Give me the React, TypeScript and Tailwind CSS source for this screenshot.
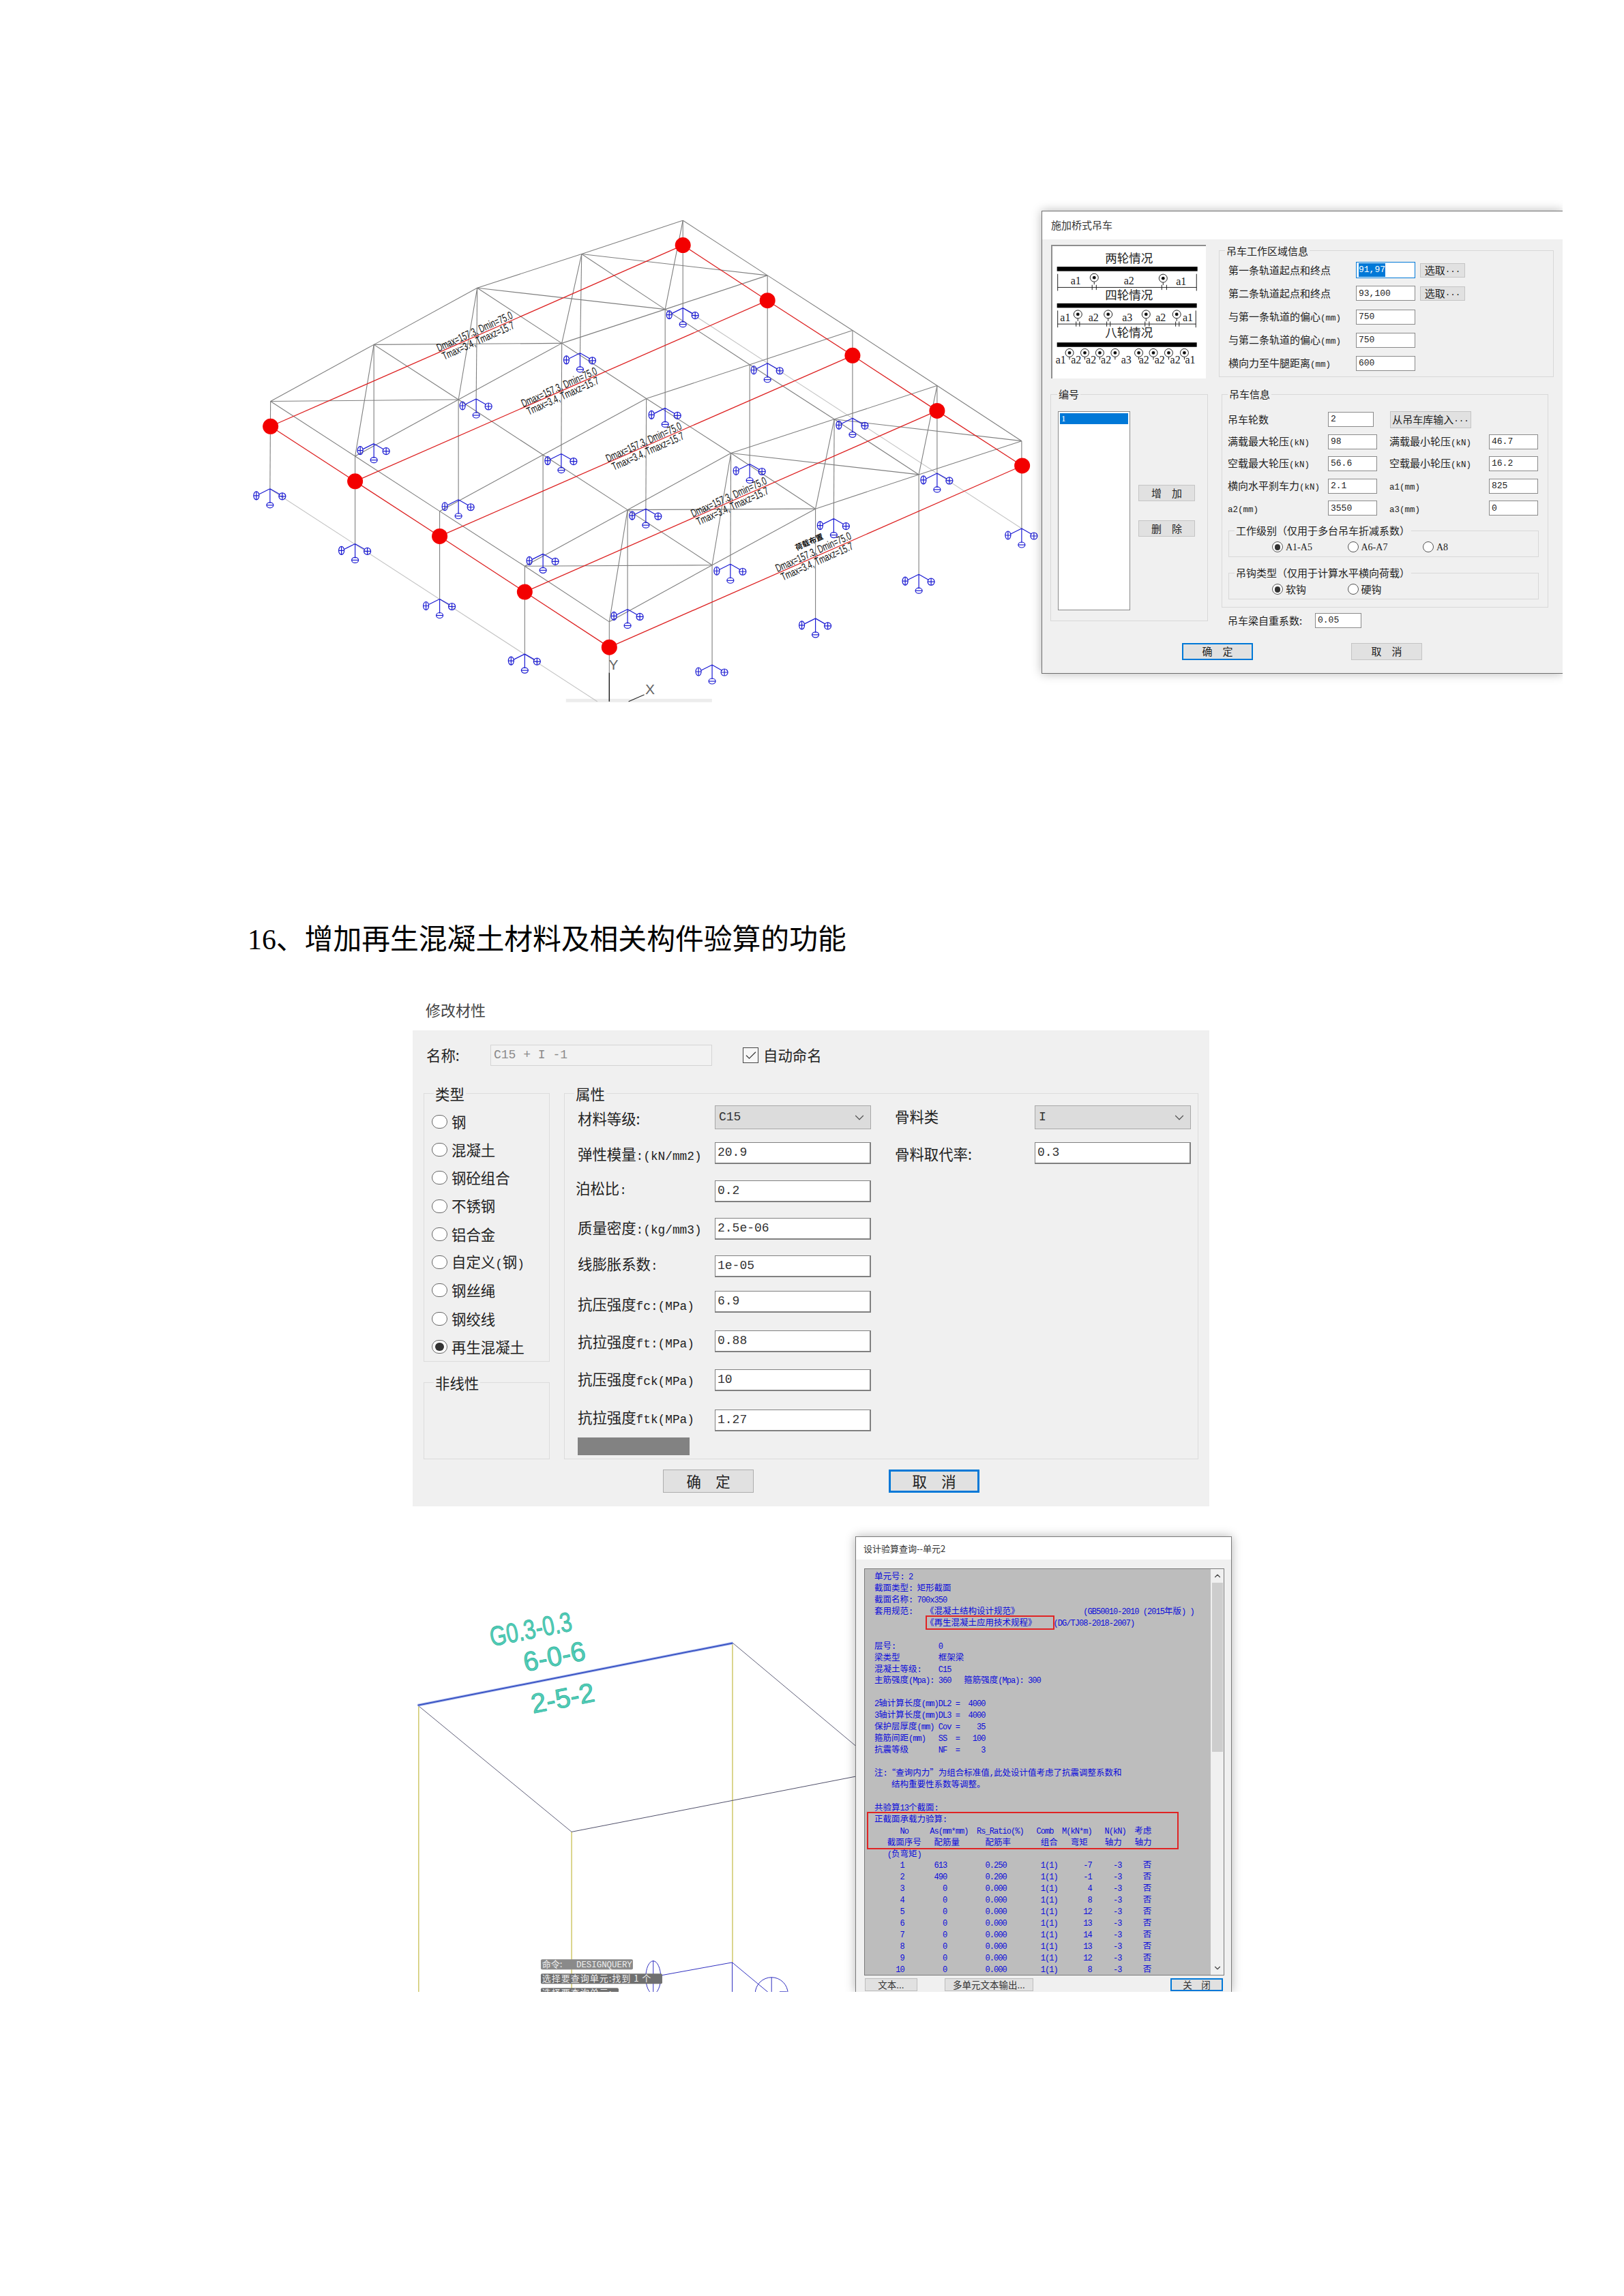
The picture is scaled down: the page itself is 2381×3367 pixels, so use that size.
import { Check, ChevronDown, ChevronUp } from "lucide-react";
import type { ReactNode } from "react";

const range = (n: number) => Array.from({ length: n }, (_, i) => i);

// splits a string into half-width and full-width runs, like SimSun in the old dialogs
function Mixed({ text, a, c }: { text: string; a: string; c: string }) {
  const runs = text.match(/[\x00-\x7f]+|[^\x00-\x7f]+/g) ?? [];
  return (
    <>
      {runs.map((r, i) => (
        <span key={i} className={/^[\x00-\x7f]/.test(r) ? a : c}>
          {r}
        </span>
      ))}
    </>
  );
}

/* ---------- frame drawing at the top ---------- */

const GRID = [
  [[74, 620], [236, 782], [398, 944], [561, 1106], [723, 1270]],
  [[272, 453], [434, 615], [596, 778], [758, 940], [920, 1103]],
  [[470, 286], [632, 449], [794, 612], [956, 773], [1118, 937]],
  [[670, 186], [830, 349], [992, 512], [1154, 673], [1316, 836]],
  [[864, 87], [1026, 249], [1189, 411], [1351, 574], [1513, 737]],
];
const BASES = [
  [[73, 878], [236, 1040], [398, 1203], [561, 1365], null],
  [[272, 745], [434, 910], [596, 1070], [758, 1233], [920, 1397]],
  [[468, 613], [631, 775], [793, 937], [955, 1100], [1118, 1260]],
  [[667, 478], [830, 640], [992, 805], [1153, 966], [1316, 1130]],
  [[864, 345], [1026, 508], [1189, 670], [1351, 832], [1513, 995]],
];
const LEFT = [[74, 694], [236, 856], [398, 1018], [561, 1182], [723, 1345]];
const RIGHT = [[864, 160], [1026, 323], [1189, 485], [1351, 648], [1514, 810]];
const LABELS = [
  [465, 415, 472, 442],
  [627, 579, 634, 605],
  [789, 741, 797, 768],
  [952, 903, 959, 930],
  [1114, 1065, 1121, 1093],
];

const fx = (x: number) => x / 1.3067;
const fy = (y: number) => y / 2.01;

function FLine({ a, b, color = "#7f7f7f", w = 1.1 }: { a: number[]; b: number[]; color?: string; w?: number }) {
  return <line x1={fx(a[0])} y1={fy(a[1])} x2={fx(b[0])} y2={fy(b[1])} stroke={color} strokeWidth={w} />;
}

function Support({ at }: { at: number[] }) {
  const x = fx(at[0]);
  const y = fy(at[1]);
  return (
    <g stroke="#1a1ad2" strokeWidth={1.2} fill="none">
      <path d={`M${x} ${y}v21M${x} ${y}l-16 8M${x} ${y}l14 8`} />
      <ellipse cx={x - 20} cy={y + 10} rx={4} ry={6} />
      <path d={`M${x - 20} ${y + 4}v12M${x - 24} ${y + 10}h8`} />
      <circle cx={x + 18} cy={y + 11} r={5} />
      <path d={`M${x + 18} ${y + 6}v10M${x + 13} ${y + 11}h10`} />
      <ellipse cx={x} cy={y + 24} rx={5} ry={4} />
      <path d={`M${x - 5} ${y + 24}h10`} />
    </g>
  );
}

function FrameDrawing() {
  return (
    <svg width={1187} height={750} className="shrink-0 overflow-hidden">
      <rect x={fx(640)} y={fy(1497)} width={214} height={5} fill="#ececec" />
      <FLine a={[74, 880]} b={[700, 1505]} color="#c4c4c4" />
      <FLine a={[864, 345]} b={[1513, 995]} color="#c4c4c4" />
      {range(5).map((i) =>
        range(5).map((j) => (
          <g key={`${i}-${j}`}>
            {j < 4 && <FLine a={GRID[i][j]} b={GRID[i][j + 1]} />}
            {i < 4 && <FLine a={GRID[i][j]} b={GRID[i + 1][j]} />}
            <FLine a={GRID[i][j]} b={BASES[i][j] ?? [723, 1420]} />
          </g>
        )),
      )}
      {range(4).map((i) => (
        <g key={i}>
          <FLine a={GRID[i][0]} b={GRID[i + 1][1]} />
          <FLine a={GRID[i][3]} b={GRID[i + 1][4]} />
          <FLine a={GRID[i + 1][0]} b={GRID[i][1]} />
          <FLine a={GRID[i + 1][3]} b={GRID[i][4]} />
        </g>
      ))}
      {BASES.flat().map((b, i) => b && <Support key={i} at={b} />)}
      {range(5).map((i) => (
        <FLine key={i} a={LEFT[i]} b={RIGHT[i]} color="#dd2222" w={1.3} />
      ))}
      {range(4).map((i) => (
        <g key={i}>
          <FLine a={LEFT[i]} b={LEFT[i + 1]} color="#dd2222" w={1.3} />
          <FLine a={RIGHT[i]} b={RIGHT[i + 1]} color="#dd2222" w={1.3} />
        </g>
      ))}
      {[...LEFT, ...RIGHT].map((n, i) => (
        <circle key={i} cx={fx(n[0])} cy={fy(n[1])} r={11.5} fill="#f30000" />
      ))}
      {LABELS.map((l, i) => (
        <g key={i} fontFamily="Liberation Sans, sans-serif" fontSize={16} fill="#111" textAnchor="middle">
          <text
            transform={`translate(${fx(l[0])} ${fy(l[1])}) rotate(-24.3)`}
            textLength={120}
            lengthAdjust="spacingAndGlyphs"
            dy={5}
          >
            Dmax=157.3, Dmin=75.0
          </text>
          <text
            transform={`translate(${fx(l[2])} ${fy(l[3])}) rotate(-24.3)`}
            textLength={114}
            lengthAdjust="spacingAndGlyphs"
            dy={5}
          >
            Tmax=3.4, Tmaxz=15.7
          </text>
        </g>
      ))}
      <text
        transform={`translate(${fx(1108)} ${fy(1042)}) rotate(-24.3)`}
        fontFamily="Noto Sans CJK SC, sans-serif"
        fontSize={11}
        fontWeight={700}
        fill="#111"
        textAnchor="middle"
      >
        荷载布置
      </text>
      <FLine a={[723, 1420]} b={[723, 1505]} color="#222" w={1.5} />
      <FLine a={[760, 1505]} b={[790, 1485]} color="#222" />
      <text x={fx(722)} y={fy(1412)} fontFamily="Liberation Sans, sans-serif" fontSize={21} fill="#666">
        Y
      </text>
      <text x={fx(792)} y={fy(1484)} fontFamily="Liberation Sans, sans-serif" fontSize={21} fill="#666">
        X
      </text>
    </svg>
  );
}

/* ---------- crane dialog ---------- */

const craneA = "[font-family:'Liberation_Mono',monospace] text-[12.5px]";
const craneC = "text-[15px]";
const craneVal = "[font-family:'Liberation_Mono',monospace] text-[13px] text-[#222] pl-[3px]";

function CraneField({ value, className }: { value: string; className: string }) {
  return (
    <div className={`h-[22px] border border-[#8a8a8a] bg-white flex items-center shrink-0 ${craneVal} ${className}`}>
      {value}
    </div>
  );
}

function CraneButton({ children, className }: { children: ReactNode; className: string }) {
  return (
    <div className={`flex items-center justify-center bg-[#e1e1e1] border border-[#c4c4c4] text-[15px] text-[#222] shrink-0 whitespace-pre ${className}`}>
      {children}
    </div>
  );
}

function Group({
  title,
  className,
  legendClass,
  children,
}: {
  title: string;
  className: string;
  legendClass: string;
  children?: ReactNode;
}) {
  return (
    <div className={`relative border shrink-0 ${className}`}>
      <div className={`absolute bg-[#f0f0f0] whitespace-nowrap ${legendClass}`}>{title}</div>
      {children}
    </div>
  );
}

function Radio({ on, className }: { on?: boolean; className: string }) {
  return (
    <span className={`rounded-full border border-[#555] bg-white flex items-center justify-center shrink-0 ${className}`}>
      {on && <span className="w-[62%] h-[62%] rounded-full bg-[#333]" />}
    </span>
  );
}

const dx = (x: number) => (x - 60) / 1.96 - 2;
const dy = (y: number) => (y - 150) / 2.178 - 2;

function Wheel({ x, y }: { x: number; y: number }) {
  return (
    <g>
      <circle cx={dx(x)} cy={dy(y)} r={6} fill="none" stroke="#222" strokeWidth={1} />
      <circle cx={dx(x)} cy={dy(y)} r={2.4} fill="#111" />
      <line x1={dx(x)} y1={dy(y) + 6} x2={dx(x)} y2={dy(y) + 10} stroke="#222" />
    </g>
  );
}

function Dim({ y, x1, x2, ticks }: { y: number; x1: number; x2: number; ticks: number[] }) {
  return (
    <g stroke="#222" strokeWidth={1}>
      <line x1={dx(x1)} y1={dy(y)} x2={dx(x2)} y2={dy(y)} />
      <line x1={dx(x1)} y1={dy(y - 43)} x2={dx(x1)} y2={dy(y + 11)} />
      <line x1={dx(x2)} y1={dy(y - 43)} x2={dx(x2)} y2={dy(y + 11)} />
      {ticks.map((t) => (
        <line key={t} x1={dx(t)} y1={dy(y - 8)} x2={dx(t)} y2={dy(y + 8)} />
      ))}
    </g>
  );
}

function WheelDiagram() {
  const title = (t: string, y: number) => (
    <text x={dx(284)} y={dy(y)} textAnchor="middle" fontFamily="Noto Sans CJK SC, sans-serif" fontSize={17.5} fill="#222">
      {t}
    </text>
  );
  const lab = (t: string, x: number, y: number) => (
    <text key={`${t}${x}`} x={dx(x)} y={dy(y)} textAnchor="middle" fontFamily="Liberation Serif, serif" fontSize={16} fill="#222">
      {t}
    </text>
  );
  return (
    <svg width={225} height={194} className="block">
      {title("两轮情况", 207)}
      <rect x={dx(77)} y={dy(220)} width={206} height={6.5} fill="#000" />
      {[[131, 276, "a1"], [284, 276, "a2"], [434, 278, "a1"]].map(([x, y, t]) => lab(t as string, x as number, y as number))}
      <Wheel x={184} y={255} />
      <Wheel x={382} y={257} />
      <Dim y={286} x1={79} x2={478} ticks={[178, 190, 378, 392]} />
      {title("四轮情况", 324)}
      <rect x={dx(77)} y={dy(337)} width={205} height={6.5} fill="#000" />
      {[[101, "a1"], [182, "a2"], [279, "a3"], [375, "a2"], [453, "a1"]].map(([x, t]) => lab(t as string, x as number, 395))}
      {[137, 224, 333, 421].map((x) => (
        <Wheel key={x} x={x} y={372} />
      ))}
      <Dim y={403} x1={79} x2={476} ticks={[132, 142, 220, 230, 330, 342, 418, 428]} />
      {title("八轮情况", 445)}
      <rect x={dx(77)} y={dy(462)} width={205} height={6.5} fill="#000" />
      {[[88, "a1"], [132, "a2"], [175, "a2"], [218, "a2"], [276, "a3"], [327, "a2"], [372, "a2"], [417, "a2"], [460, "a1"]].map(([x, t]) =>
        lab(t as string, x as number, 530),
      )}
      {[113, 157, 200, 244, 312, 354, 398, 443].map((x) => (
        <Wheel key={x} x={x} y={495} />
      ))}
    </svg>
  );
}

const AREA_ROWS = [
  ["第一条轨道起点和终点", "91,97", true],
  ["第二条轨道起点和终点", "93,100", true],
  ["与第一条轨道的偏心(mm)", "750", false],
  ["与第二条轨道的偏心(mm)", "750", false],
  ["横向力至牛腿距离(mm)", "600", false],
] as const;

const INFO_ROWS = [
  ["满载最大轮压(kN)", "98", "满载最小轮压(kN)", "46.7"],
  ["空载最大轮压(kN)", "56.6", "空载最小轮压(kN)", "16.2"],
  ["横向水平刹车力(kN)", "2.1", "a1(mm)", "825"],
  ["a2(mm)", "3550", "a3(mm)", "0"],
];

function CraneDialog() {
  return (
    <div className="mt-[29px] w-[764px] h-[679px] shrink-0 bg-[#f0f0f0] border-l border-t border-b border-[#6e6e6e] shadow-[0_0_14px_rgba(0,0,0,0.28)] [clip-path:inset(-20px_0_-20px_-20px)] text-[#222] text-[15px]">
      <div className="h-[41px] bg-white pl-[13px] flex items-center text-[15px] text-[#333]">施加桥式吊车</div>
      <div className="flex pt-[8px]">
        <div className="w-[243px] pl-[12px] shrink-0">
          <div className="w-[227px] h-[196px] ml-[1px] bg-white border-l-2 border-t-2 border-[#8e8e8e]">
            <WheelDiagram />
          </div>
          <Group
            title="编号"
            className="mt-[23px] w-[231px] h-[333px] border-[#d8d8d8] pl-[10px] pt-[24px] flex"
            legendClass="-top-[11px] left-[9px] px-[2px] text-[15px] leading-[20px]"
          >
            <div className="w-[106px] h-[292px] bg-white border border-[#8a8a8a] p-[2px]">
              <div className="h-[16px] bg-[#0078d7] text-white text-[13px] leading-[16px] pl-[2px] [font-family:'Liberation_Serif',serif]">1</div>
            </div>
            <div className="ml-[12px] pt-[108px] flex flex-col gap-[28px]">
              <CraneButton className="w-[83px] h-[24px]">增　加</CraneButton>
              <CraneButton className="w-[83px] h-[24px]">删　除</CraneButton>
            </div>
          </Group>
        </div>
        <div className="ml-[16px] mt-[8px]">
          <Group
            title="吊车工作区域信息"
            className="w-[491px] h-[186px] border-[#d8d8d8] pl-[13px] pt-[17px] flex flex-col gap-[12.3px]"
            legendClass="-top-[10px] left-[8px] px-[2px] text-[15px] leading-[20px]"
          >
            {AREA_ROWS.map(([label, value, pick], i) => (
              <div key={label} className="flex items-center h-[22px] whitespace-pre">
                <div className="w-[187px] shrink-0">
                  <Mixed text={label} a={craneA} c={craneC} />
                </div>
                {i === 0 ? (
                  <div className="w-[87px] h-[24px] border border-[#0078d7] bg-white flex items-center pl-[3px] [font-family:'Liberation_Mono',monospace] text-[13px] shrink-0">
                    <span className="bg-[#0078d7] text-white">{value}</span>
                  </div>
                ) : (
                  <CraneField value={value} className="w-[87px]" />
                )}
                {pick && (
                  <CraneButton className="ml-[7px] w-[66px] h-[21px]">
                    <Mixed text="选取..." a={craneA} c={craneC} />
                  </CraneButton>
                )}
              </div>
            ))}
          </Group>
          <Group
            title="吊车信息"
            className="mt-[25px] ml-[4px] w-[479px] h-[313px] border-[#d8d8d8] pl-[8px] pt-[25px]"
            legendClass="-top-[11px] left-[8px] px-[2px] text-[15px] leading-[20px]"
          >
            <div className="flex flex-col gap-[10.6px]">
              <div className="flex items-center h-[22px]">
                <div className="w-[147px] shrink-0">吊车轮数</div>
                <CraneField value="2" className="w-[67px]" />
                <CraneButton className="ml-[24px] w-[119px] h-[25px]">
                  <Mixed text="从吊车库输入..." a={craneA} c={craneC} />
                </CraneButton>
              </div>
              {INFO_ROWS.map((r) => (
                <div key={r[0]} className="flex items-center h-[22px] whitespace-pre">
                  <div className="w-[147px] shrink-0">
                    <Mixed text={r[0]} a={craneA} c={craneC} />
                  </div>
                  <CraneField value={r[1]} className="w-[72px]" />
                  <div className="ml-[18px] w-[146px] shrink-0">
                    <Mixed text={r[2]} a={craneA} c={craneC} />
                  </div>
                  <CraneField value={r[3]} className="w-[72px]" />
                </div>
              ))}
            </div>
            <Group
              title="工作级别（仅用于多台吊车折减系数）"
              className="mt-[22px] ml-[1px] w-[455px] h-[39px] border-[#d8d8d8] pl-[63px] pt-[15px] flex"
              legendClass="-top-[11px] left-[8px] px-[2px] text-[15px] leading-[20px]"
            >
              {["A1-A5", "A6-A7", "A8"].map((t, i) => (
                <div key={t} className="w-[110.5px] flex items-center gap-[4px] h-[16px]">
                  <Radio on={i === 0} className="w-[16px] h-[16px]" />
                  <span className="[font-family:'Liberation_Serif',serif] text-[14px]">{t}</span>
                </div>
              ))}
            </Group>
            <Group
              title="吊钩类型（仅用于计算水平横向荷载）"
              className="mt-[23px] ml-[1px] w-[455px] h-[39px] border-[#d8d8d8] pl-[63px] pt-[15px] flex"
              legendClass="-top-[11px] left-[8px] px-[2px] text-[15px] leading-[20px]"
            >
              {["软钩", "硬钩"].map((t, i) => (
                <div key={t} className="w-[110.5px] flex items-center gap-[4px] h-[16px]">
                  <Radio on={i === 0} className="w-[16px] h-[16px]" />
                  <span className="text-[15px]">{t}</span>
                </div>
              ))}
            </Group>
          </Group>
          <div className="mt-[8px] ml-[13px] flex items-center h-[22px]">
            <div className="w-[128px] shrink-0">吊车梁自重系数:</div>
            <CraneField value="0.05" className="w-[68px]" />
          </div>
        </div>
      </div>
      <div className="flex mt-[22px] ml-[205px] gap-[144px]">
        <CraneButton className="w-[104px] h-[25px] !border-2 !border-[#0078d7]">确　定</CraneButton>
        <CraneButton className="w-[104px] h-[25px]">取　消</CraneButton>
      </div>
    </div>
  );
}

/* ---------- material dialog ---------- */

const matA = "[font-family:'Liberation_Mono',monospace] text-[17.8px]";
const matC = "text-[21.4px]";
const matVal = "[font-family:'Liberation_Mono',monospace] text-[18px] text-[#333]";

const MAT_TYPES = ["钢", "混凝土", "钢砼组合", "不锈钢", "铝合金", "自定义(钢)", "钢丝绳", "钢绞线", "再生混凝土"];

const MAT_ROWS = [
  { label: "弹性模量:(kN/mm2)", value: "20.9", row: "mt-[19px]", lab: "pt-[4px]", inner: "" },
  { label: "泊松比:", value: "0.2", row: "mt-[24px]", lab: "pb-[9px]", inner: "-ml-[3px]" },
  { label: "质量密度:(kg/mm3)", value: "2.5e-06", row: "mt-[23px]", lab: "pb-[2px]", inner: "" },
  { label: "线膨胀系数:", value: "1e-05", row: "mt-[23px]", lab: "pb-[6px]", inner: "" },
  { label: "抗压强度fc:(MPa)", value: "6.9", row: "mt-[20px]", lab: "pt-[8px]", inner: "" },
  { label: "抗拉强度ft:(MPa)", value: "0.88", row: "mt-[26px]", lab: "pt-[2px]", inner: "" },
  { label: "抗压强度fck(MPa)", value: "10", row: "mt-[25px]", lab: "pb-[2px]", inner: "" },
  { label: "抗拉强度ftk(MPa)", value: "1.27", row: "mt-[27px]", lab: "pb-[9px]", inner: "" },
];

function MatSelect({ value }: { value: string }) {
  return (
    <div className={`w-[229px] h-[35px] shrink-0 bg-[#dcdcdc] border border-[#a8a8a8] flex items-center justify-between pl-[5px] pr-[5px] ${matVal}`}>
      <span>{value}</span>
      <ChevronDown size={22} strokeWidth={1.3} className="text-[#555]" />
    </div>
  );
}

function MatInput({ value }: { value: string }) {
  return (
    <div className={`w-[229px] h-[32px] shrink-0 bg-white border border-[#808080] border-b-[2px] border-r-[2px] flex items-center pl-[3px] ${matVal}`}>
      {value}
    </div>
  );
}

const matLegend = "-top-[14px] left-[14px] px-[2px] text-[21.4px] leading-[28px]";

function MaterialDialog() {
  return (
    <div className="ml-[605px] text-[#222]">
      <div className="h-[30px] mt-[51px] ml-[19px] text-[22px] leading-[30px] text-[#444]">修改材性</div>
      <div className="mt-[16px] w-[1168px] h-[698px] bg-[#f0f0f0] pl-[16px]">
        <div className="pt-[21px] flex items-center h-[52px]">
          <div className="ml-[4px] w-[94px] text-[21.4px]">名称:</div>
          <div className="w-[325px] h-[31px] border border-[#d4d4d4] bg-[#f2f2f2] flex items-center pl-[4px] whitespace-pre [font-family:'Liberation_Mono',monospace] text-[18px] text-[#8a8a8a]">
            C15 + I -1
          </div>
          <div className="ml-[45px] w-[23px] h-[23px] border border-[#444] flex items-center justify-center bg-[#f7f7f7]">
            <Check size={20} strokeWidth={1.4} className="text-[#333]" />
          </div>
          <div className="ml-[7px] text-[21.4px]">自动命名</div>
        </div>
        <div className="flex mt-[40px] gap-[21px]">
          <div className="w-[185px] shrink-0">
            <Group title="类型" className="w-[185px] h-[394px] border-[#dcdcdc] pl-[11px] pt-[20px]" legendClass={matLegend}>
              {MAT_TYPES.map((t, i) => (
                <div key={t} className="h-[41.3px] flex items-center gap-[6px] whitespace-pre">
                  <Radio on={i === 8} className="w-[23px] h-[20px] !border-[#666]" />
                  <div>
                    <Mixed text={t} a={matA} c={matC} />
                  </div>
                </div>
              ))}
            </Group>
            <Group title="非线性" className="mt-[30px] w-[185px] h-[113px] border-[#dcdcdc]" legendClass={matLegend} />
          </div>
          <Group title="属性" className="w-[930px] h-[537px] border-[#dcdcdc] pl-[19px] pt-[17px] flex" legendClass={matLegend}>
            <div className="w-[430px] shrink-0">
              <div className="flex items-center h-[35px]">
                <div className="w-[201px] shrink-0 text-[21.4px] pt-[4px]">材料等级:</div>
                <MatSelect value="C15" />
              </div>
              {MAT_ROWS.map((r) => (
                <div key={r.label} className={`flex items-center h-[32px] whitespace-pre ${r.row}`}>
                  <div className={`w-[201px] shrink-0 ${r.lab}`}>
                    <div className={r.inner}>
                      <Mixed text={r.label} a={matA} c={matC} />
                    </div>
                  </div>
                  <MatInput value={r.value} />
                </div>
              ))}
              <div className="mt-[9px] w-[164px] h-[26px] bg-[#828282]" />
            </div>
            <div className="ml-[35px]">
              <div className="flex items-center h-[35px]">
                <div className="w-[205px] shrink-0 text-[21.4px] pb-[2px]">骨料类</div>
                <MatSelect value="I" />
              </div>
              <div className="flex items-center h-[32px] mt-[19px]">
                <div className="w-[205px] shrink-0 text-[21.4px] pt-[2px]">骨料取代率:</div>
                <MatInput value="0.3" />
              </div>
            </div>
          </Group>
        </div>
        <div className="flex ml-[351px] mt-[15px] gap-[198px]">
          <div className="w-[133px] h-[34px] bg-[#e1e1e1] border border-[#adadad] flex items-center justify-center text-[21.4px]">确　定</div>
          <div className="w-[133px] h-[34px] bg-[#e1e1e1] border-[3px] border-[#0078d7] flex items-center justify-center text-[21.4px]">取　消</div>
        </div>
      </div>
    </div>
  );
}

/* ---------- beam sketch + design query dialog ---------- */

const bx = (x: number) => x / 2.306;
const by = (y: number) => y / 2.376;

function BeamLabel({ x, y, w, children }: { x: number; y: number; w: number; children: string }) {
  return (
    <text
      transform={`translate(${bx(x)} ${by(y)}) rotate(-11.2)`}
      textAnchor="middle"
      fontFamily="Liberation Sans, sans-serif"
      fontSize={40}
      fill="#52cdb6"
      stroke="#2fb3a0"
      strokeWidth={0.8}
      textLength={w}
      lengthAdjust="spacingAndGlyphs"
    >
      {children}
    </text>
  );
}

function BeamSketch() {
  const seg = (a: number[], b: number[], color: string, w = 1) => (
    <line x1={bx(a[0])} y1={by(a[1])} x2={bx(b[0])} y2={by(b[1])} stroke={color} strokeWidth={w} />
  );
  const mono = "Liberation Mono, monospace";
  const cjk = "Noto Sans CJK SC, sans-serif";
  return (
    <svg width={664} height={621} className="mt-[47px] shrink-0 block">
      {seg([55, 477], [55, 1480], "#c4ba45", 1.2)}
      {seg([572, 918], [572, 1480], "#c4ba45", 1.2)}
      {seg([1116, 260], [1116, 1373], "#c4ba45", 1.2)}
      {seg([52, 477], [572, 918], "#5f5f78")}
      {seg([572, 918], [1532, 725], "#50506a")}
      {seg([1117, 260], [1532, 618], "#5f5f78")}
      {seg([52, 477], [1117, 260], "#b8c4f0", 4)}
      {seg([52, 477], [1117, 260], "#3a54c4", 2)}
      <BeamLabel x={440} y={244} w={122}>G0.3-0.3</BeamLabel>
      <BeamLabel x={520} y={339} w={92}>6-0-6</BeamLabel>
      <BeamLabel x={548} y={484} w={94}>2-5-2</BeamLabel>
      {seg([875, 1418], [1115, 1373], "#3030c0")}
      {seg([1115, 1373], [1115, 1480], "#3030c0")}
      {seg([1115, 1373], [1240, 1480], "#3030c0")}
      {seg([848, 1366], [848, 1480], "#3030c0")}
      <ellipse cx={bx(848)} cy={by(1425)} rx={11} ry={24} fill="none" stroke="#3030c0" />
      <circle cx={bx(1248)} cy={by(1482)} r={24} fill="none" stroke="#3030c0" />
      {seg([1248, 1425], [1248, 1480], "#3030c0")}
      {seg([1275, 1475], [1300, 1475], "#3030c0")}
      <rect x={bx(468)} y={by(1362)} width={135} height={15} rx={2} fill="#8a8a8a" />
      <text x={bx(472)} y={by(1390)} fontFamily={cjk} fontSize={13} fill="#eee">命令:</text>
      <text x={bx(588)} y={by(1390)} fontFamily={mono} fontSize={12.4} fill="#eee">DESIGNQUERY</text>
      <rect x={bx(468)} y={by(1412)} width={178} height={15} rx={2} fill="#707070" />
      <text x={bx(472)} y={by(1440)} fontFamily={cjk} fontSize={13} fill="#eee" letterSpacing={1}>选择要查询单元:找到 1 个</text>
      <rect x={bx(468)} y={by(1462)} width={114} height={15} rx={2} fill="#707070" />
      <text x={bx(472)} y={by(1490)} fontFamily={cjk} fontSize={13} fill="#eee" letterSpacing={1}>选择要查询单元:</text>
    </svg>
  );
}

const SECTION_ROWS = [
  ["1", "613", "0.250", "-7"],
  ["2", "490", "0.200", "-1"],
  ["3", "0", "0.000", "4"],
  ["4", "0", "0.000", "8"],
  ["5", "0", "0.000", "12"],
  ["6", "0", "0.000", "13"],
  ["7", "0", "0.000", "14"],
  ["8", "0", "0.000", "13"],
  ["9", "0", "0.000", "12"],
  ["10", "0", "0.000", "8"],
].map(([no, as, ratio, m]) => `${no.padStart(7)}${as.padStart(10)}         ${ratio}        1(1)${m.padStart(8)}     -3     否`);

const REPORT = [
  "单元号: 2",
  "截面类型: 矩形截面",
  "截面名称: 700x350",
  "套用规范:   《混凝土结构设计规范》               (GB50010-2010 (2015年版) )",
  "            《再生混凝土应用技术规程》    (DG/TJ08-2018-2007)",
  "",
  "层号:          0",
  "梁类型         框架梁",
  "混凝土等级:    C15",
  "主筋强度(Mpa): 360   箍筋强度(Mpa): 300",
  "",
  "2轴计算长度(mm)DL2 =  4000",
  "3轴计算长度(mm)DL3 =  4000",
  "保护层厚度(mm) Cov =    35",
  "箍筋间距(mm)   SS  =   100",
  "抗震等级       NF  =     3",
  "",
  "注:“查询内力”为组合标准值,此处设计值考虑了抗震调整系数和",
  "    结构重要性系数等调整。",
  "",
  "共验算13个截面:",
  "正截面承载力验算:",
  "      No     As(mm*mm)  Rs_Ratio(%)   Comb  M(kN*m)   N(kN)  考虑",
  "   截面序号   配筋量      配筋率       组合   弯矩    轴力   轴力",
  "   (负弯矩)",
  ...SECTION_ROWS,
];

const repA = "[font-family:'Liberation_Mono',monospace] text-[12px] tracking-[-0.95px]";
const repC = "text-[12.5px]";

function QueryDialog() {
  return (
    <div className="mt-0 w-[552px] h-[668px] shrink-0 bg-[#f0f0f0] border-l border-t border-r border-[#7a7a7a] shadow-[0_0_14px_rgba(0,0,0,0.3)] [clip-path:inset(-20px_-20px_0_-20px)]">
      <div className="h-[33px] bg-white pl-[11px] flex items-center text-[13px] text-[#333]">设计验算查询--单元2</div>
      <div className="ml-[12px] mt-[13px] w-[528px] h-[597px] border border-[#7a7a7a] flex overflow-hidden">
        <div className="relative flex-1 bg-[#bdbdbd] pl-[14px] text-[#0b0bdc]">
          {REPORT.map((line, i) => (
            <div key={i} className="h-[16.95px] leading-[17px] whitespace-pre">
              <Mixed text={line} a={repA} c={repC} />
            </div>
          ))}
          <div className="absolute left-[89px] top-[68px] w-[189px] h-[21px] border-2 border-[#e02424]" />
          <div className="absolute left-[3px] top-[356px] w-[457px] h-[55px] border-2 border-[#e02424]" />
        </div>
        <div className="w-[19px] shrink-0 bg-[#f0f0f0] flex flex-col items-center">
          <ChevronUp size={14} strokeWidth={2} className="my-[3px] text-[#444]" />
          <div className="w-[16px] h-[248px] bg-[#cdcdcd]" />
          <div className="flex-1" />
          <ChevronDown size={14} strokeWidth={2} className="my-[3px] text-[#444]" />
        </div>
      </div>
      <div className="flex ml-[13px] mt-[4px] text-[13.5px] text-[#333]">
        <div className="w-[77px] h-[19px] bg-[#e1e1e1] border border-[#bdbdbd] flex items-center justify-center">文本...</div>
        <div className="ml-[40px] w-[130px] h-[19px] bg-[#e1e1e1] border border-[#bdbdbd] flex items-center justify-center">多单元文本输出...</div>
        <div className="ml-[201px] w-[77px] h-[19px] bg-[#e1e1e1] border-2 border-[#0078d7] flex items-center justify-center">关　闭</div>
      </div>
    </div>
  );
}

export default function App() {
  return (
    <div className="w-[2381px] h-[3367px] bg-white overflow-hidden [font-family:'Noto_Sans_CJK_SC',sans-serif]">
      <div className="flex pl-[340px] pt-[280px]">
        <FrameDrawing />
        <CraneDialog />
      </div>
      <h1 className="mt-[312px] ml-[363px] h-[72px] leading-[72px] text-[41.8px] font-normal text-black [font-family:'Liberation_Serif','Noto_Sans_CJK_SC',serif]">
        16、增加再生混凝土材料及相关构件验算的功能
      </h1>
      <MaterialDialog />
      <div className="flex ml-[590px] mt-[44px]">
        <BeamSketch />
        <QueryDialog />
      </div>
    </div>
  );
}
